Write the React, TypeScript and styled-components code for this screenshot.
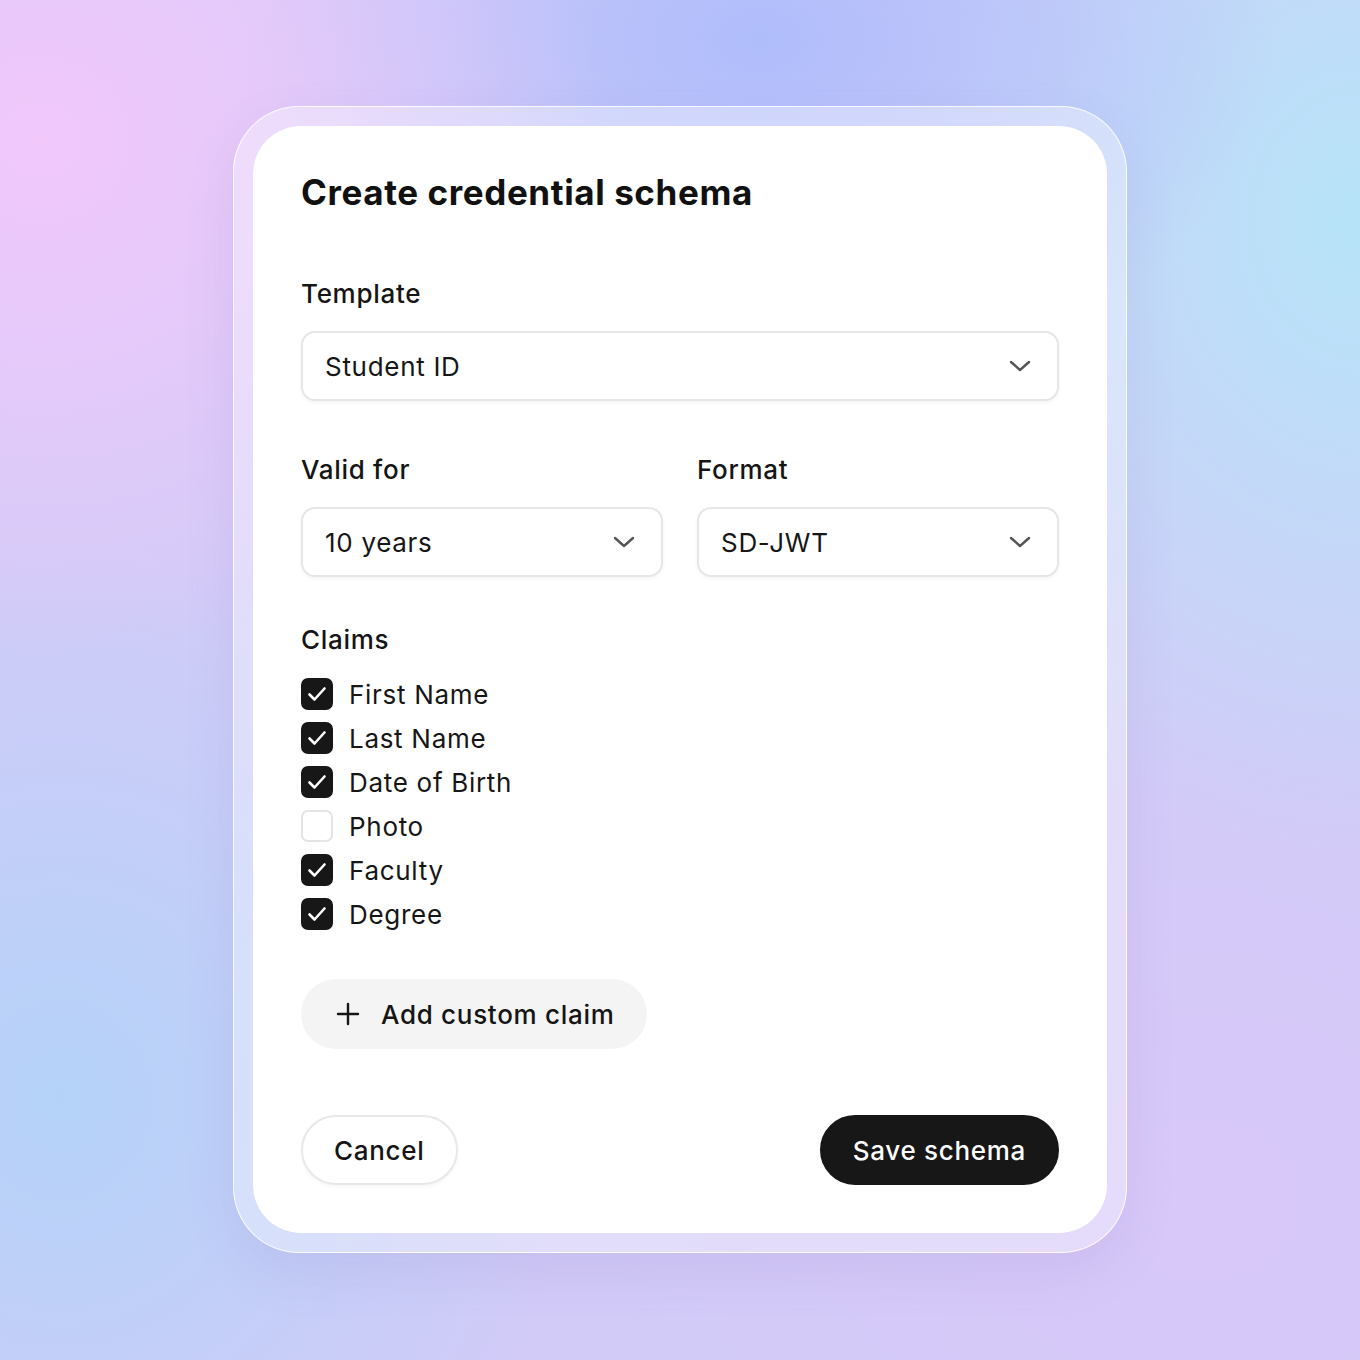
import React from "react";
import styled, { createGlobalStyle } from "styled-components";

const GlobalStyle = createGlobalStyle`
  html, body {
    margin: 0;
    padding: 0;
  }
  body {
    font-family: Inter, "Noto Sans", sans-serif;
    color: #141414;
  }
`;

const Page = styled.div`
  width: 1360px;
  height: 1360px;
  box-sizing: border-box;
  padding-top: 106px;
  display: flex;
  justify-content: center;
  align-items: flex-start;
  background:
    radial-gradient(ellipse 560px 520px at 40px 140px, #f2c8fb 0%, rgba(242, 200, 251, 0) 100%),
    radial-gradient(ellipse 520px 360px at 760px 40px, #afbdfb 0%, rgba(175, 189, 251, 0) 100%),
    radial-gradient(ellipse 520px 640px at 1360px 220px, #b6e4f8 0%, rgba(182, 228, 248, 0) 100%),
    radial-gradient(ellipse 520px 560px at 60px 1100px, #b4d2f8 0%, rgba(180, 210, 248, 0) 100%),
    radial-gradient(ellipse 600px 500px at 1200px 1200px, #d8c8f9 0%, rgba(216, 200, 249, 0) 100%),
    #d2cbf8;
`;

const Frame = styled.div`
  width: 894px;
  box-sizing: border-box;
  padding: 19px;
  border-radius: 66px;
  background: rgba(255, 255, 255, 0.35);
  border: 1.5px solid rgba(255, 255, 255, 0.85);
  box-shadow: 0 20px 50px rgba(120, 100, 180, 0.12);
`;

const Card = styled.div`
  background: #ffffff;
  border-radius: 48px;
  padding: 44px 48px 48px;
  display: flex;
  flex-direction: column;
  letter-spacing: 0.7px;
`;

const Title = styled.h1`
  margin: 0;
  font-size: 35px;
  line-height: 44px;
  font-weight: 700;
  letter-spacing: 0.6px;
  color: #111;
`;

const Field = styled.div<{ $top: number }>`
  margin-top: ${({ $top }) => $top}px;
  display: flex;
  flex-direction: column;
  gap: 21px;
  flex: 1;
  min-width: 0;
`;

const Label = styled.div`
  font-size: 26px;
  line-height: 32px;
  font-weight: 500;
  color: #151515;
`;

const Row = styled.div`
  display: flex;
  gap: 34px;
`;

const SelectBox = styled.div`
  height: 70px;
  box-sizing: border-box;
  border: 2px solid #e6e6e6;
  border-radius: 14px;
  background: #fff;
  box-shadow: 0 2px 4px rgba(0, 0, 0, 0.04);
  display: flex;
  align-items: center;
  justify-content: space-between;
  padding: 0 26px 0 22px;
  font-size: 26px;
  color: #161616;
`;

const ClaimList = styled.div`
  margin-top: 16px;
  display: flex;
  flex-direction: column;
`;

const ClaimRow = styled.label`
  height: 44px;
  display: flex;
  align-items: center;
  gap: 16px;
  font-size: 26px;
  color: #161616;
`;

const Box = styled.span<{ $checked: boolean }>`
  width: 32px;
  height: 32px;
  box-sizing: border-box;
  border-radius: 7px;
  display: flex;
  align-items: center;
  justify-content: center;
  background: ${({ $checked }) => ($checked ? "#171717" : "#fff")};
  border: 2px solid ${({ $checked }) => ($checked ? "#171717" : "#e4e4e4")};
`;

const AddButton = styled.button`
  margin-top: 43px;
  align-self: flex-start;
  height: 70px;
  width: 346px;
  border: none;
  border-radius: 35px;
  background: #f4f4f4;
  display: flex;
  align-items: center;
  gap: 21px;
  padding: 0 0 0 35px;
  font-family: inherit;
  font-size: 26px;
  font-weight: 500;
  letter-spacing: 0.7px;
  color: #151515;
`;

const Footer = styled.div`
  margin-top: 66px;
  display: flex;
  justify-content: space-between;
`;

const PillButton = styled.button<{ $primary?: boolean }>`
  height: 70px;
  box-sizing: border-box;
  padding: 0 31px;
  border-radius: 35px;
  font-family: inherit;
  font-size: 26px;
  font-weight: 500;
  letter-spacing: 0.7px;
  border: 2px solid ${({ $primary }) => ($primary ? "#171717" : "#e8e8e8")};
  background: ${({ $primary }) => ($primary ? "#171717" : "#fff")};
  color: ${({ $primary }) => ($primary ? "#fff" : "#151515")};
  box-shadow: ${({ $primary }) => ($primary ? "none" : "0 2px 4px rgba(0,0,0,0.04)")};
`;

const Chevron = () => (
  <svg width="22" height="12" viewBox="0 0 22 12" fill="none">
    <path d="M2 2l9 8 9-8" stroke="#555" strokeWidth="2.4" strokeLinecap="round" strokeLinejoin="round" />
  </svg>
);

const Check = () => (
  <svg width="20" height="16" viewBox="0 0 20 16" fill="none">
    <path d="M2.5 8.5l5 5L17.5 2.5" stroke="#fff" strokeWidth="2.6" strokeLinecap="round" strokeLinejoin="round" />
  </svg>
);

const Plus = () => (
  <svg width="24" height="24" viewBox="0 0 24 24" fill="none">
    <path d="M12 2v20M2 12h20" stroke="#151515" strokeWidth="2.4" strokeLinecap="round" />
  </svg>
);

const Select = ({ value }: { value: string }) => (
  <SelectBox>
    <span>{value}</span>
    <Chevron />
  </SelectBox>
);

const claims = [
  { name: "First Name", checked: true },
  { name: "Last Name", checked: true },
  { name: "Date of Birth", checked: true },
  { name: "Photo", checked: false },
  { name: "Faculty", checked: true },
  { name: "Degree", checked: true },
];

export default function App() {
  return (
    <>
      <GlobalStyle />
      <Page>
        <Frame>
          <Card>
            <Title>Create credential schema</Title>
            <Field $top={64}>
              <Label>Template</Label>
              <Select value="Student ID" />
            </Field>
            <Row>
              <Field $top={53}>
                <Label>Valid for</Label>
                <Select value="10 years" />
              </Field>
              <Field $top={53}>
                <Label>Format</Label>
                <Select value="SD-JWT" />
              </Field>
            </Row>
            <Field $top={47}>
              <Label>Claims</Label>
            </Field>
            <ClaimList>
              {claims.map((c) => (
                <ClaimRow key={c.name}>
                  <Box $checked={c.checked}>{c.checked && <Check />}</Box>
                  {c.name}
                </ClaimRow>
              ))}
            </ClaimList>
            <AddButton>
              <Plus />
              Add custom claim
            </AddButton>
            <Footer>
              <PillButton>Cancel</PillButton>
              <PillButton $primary>Save schema</PillButton>
            </Footer>
          </Card>
        </Frame>
      </Page>
    </>
  );
}
